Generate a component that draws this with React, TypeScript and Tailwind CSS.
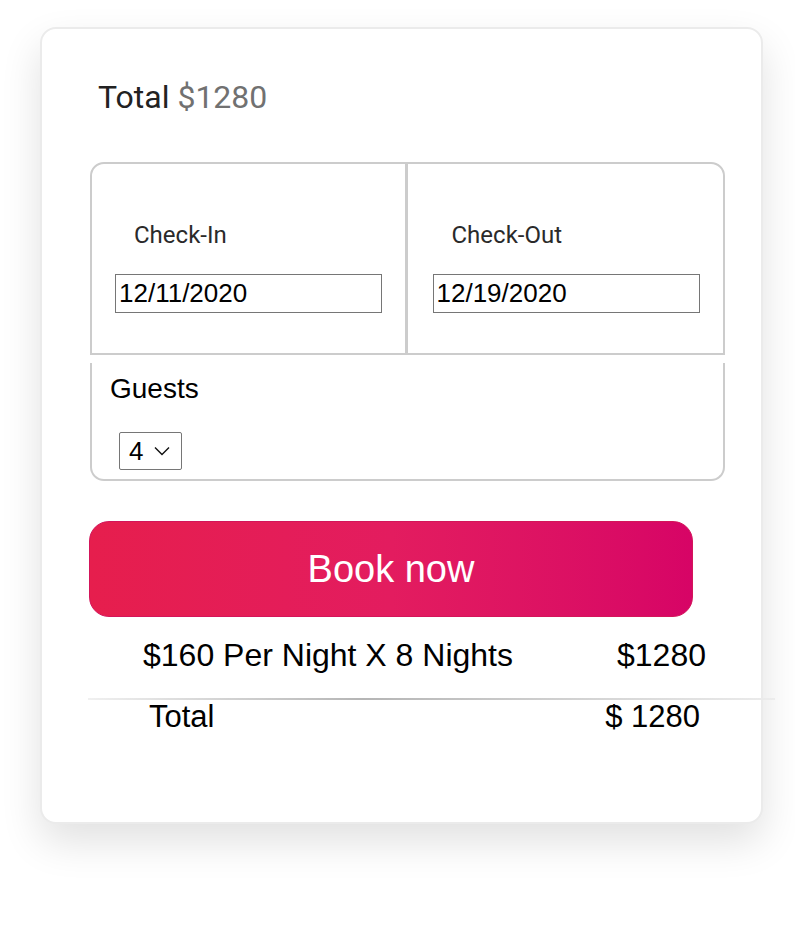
import { useState } from "react";

// Booking card: nightly price summary, date range, guests and the book button.
const ROBOTO = "font-['Roboto',sans-serif]";
const ARIAL = "font-['Liberation_Sans',Arial,sans-serif]";

const DateCell = ({ label, value, divider }: { label: string; value: string; divider?: boolean }) => (
  <div className={`pt-[57px] pb-[40px] ${divider ? "border-r-[3px] border-[#cccccc] pl-[23px]" : "pl-[25px]"}`}>
    <div className={`${ROBOTO} ml-[19px] text-[24px] leading-[28px] text-[#2a2a2a]`}>{label}</div>
    <input
      readOnly
      value={value}
      className={`${ARIAL} mt-[25px] block h-[39px] w-[267px] border border-[#767676] px-[3px] text-[26px] leading-[37px] text-black outline-none`}
    />
  </div>
);

const GuestSelect = ({ guests, onChange }: { guests: number; onChange: (n: number) => void }) => (
  <div className="relative ml-[9px] mt-[27px] h-[38px] w-[63px]">
    <select
      value={guests}
      onChange={e => onChange(Number(e.target.value))}
      className={`${ARIAL} h-full w-full appearance-none rounded-[2px] border border-[#767676] bg-white pl-[9px] text-[26px] leading-[36px] text-black outline-none`}
    >
      {[1, 2, 3, 4, 5, 6].map(n => <option key={n} value={n}>{n}</option>)}
    </select>
    <svg className="pointer-events-none absolute left-[35px] top-[14px]" width="16" height="10" viewBox="0 0 16 10" fill="none">
      <path d="M1 1.5 8 8.5 15 1.5" stroke="#111" strokeWidth="1.4" />
    </svg>
  </div>
);

export default function App() {
  const [guests, setGuests] = useState(4);
  const nightly = 160;
  const nights = 8;
  const total = nightly * nights;

  return (
    <div className="min-h-[930px] bg-white pl-[40px] pt-[27px]">
      <div className="h-[797px] w-[723px] rounded-[16px] border-2 border-[#ebebeb] bg-white pt-[48px] shadow-[0_18px_40px_rgba(0,0,0,0.12)]">
        <div className="ml-[48px] w-[635px]">
          <h2 className={`${ROBOTO} pl-[8px] text-[32px] leading-[40px] text-[#222222]`}>
            Total <span className="text-[#717171]">${total}</span>
          </h2>

          <div className="mt-[45px] grid grid-cols-2 rounded-t-[14px] border-2 border-[#cccccc]">
            <DateCell label="Check-In" value="12/11/2020" divider />
            <DateCell label="Check-Out" value="12/19/2020" />
          </div>

          <div className="mt-[8px] rounded-b-[14px] border-2 border-t-0 border-[#cccccc] pb-[9px] pl-[18px] pt-[10px]">
            <div className={`${ARIAL} text-[28px] leading-[32px] text-black`}>Guests</div>
            <GuestSelect guests={guests} onChange={setGuests} />
          </div>

          <button
            className={`${ARIAL} ml-[-1px] mt-[40px] h-[96px] w-[604px] rounded-[20px] border border-[#d3155a] bg-gradient-to-r from-[#e61e4d] via-[#e31c5f] to-[#d70466] text-[38px] text-white`}
          >
            Book now
          </button>

          <div className={`${ARIAL} mt-[20px] flex justify-between pl-[53px] pr-[19px] text-[32px] leading-[36px] text-black`}>
            <span>${nightly} Per Night X {nights} Nights</span>
            <span>${total}</span>
          </div>

          <div className="ml-[-2px] mt-[25px] h-[2px] w-[687px] bg-[linear-gradient(to_right,#f0f0f0,#b5b5b5_40%,#c8c8c8_60%,#ececec)]" />

          <div className={`${ARIAL} flex justify-between pl-[59px] pr-[25px] text-[31px] leading-[34px] text-black`}>
            <span>Total</span>
            <span>$ {total}</span>
          </div>
        </div>
      </div>
    </div>
  );
}
